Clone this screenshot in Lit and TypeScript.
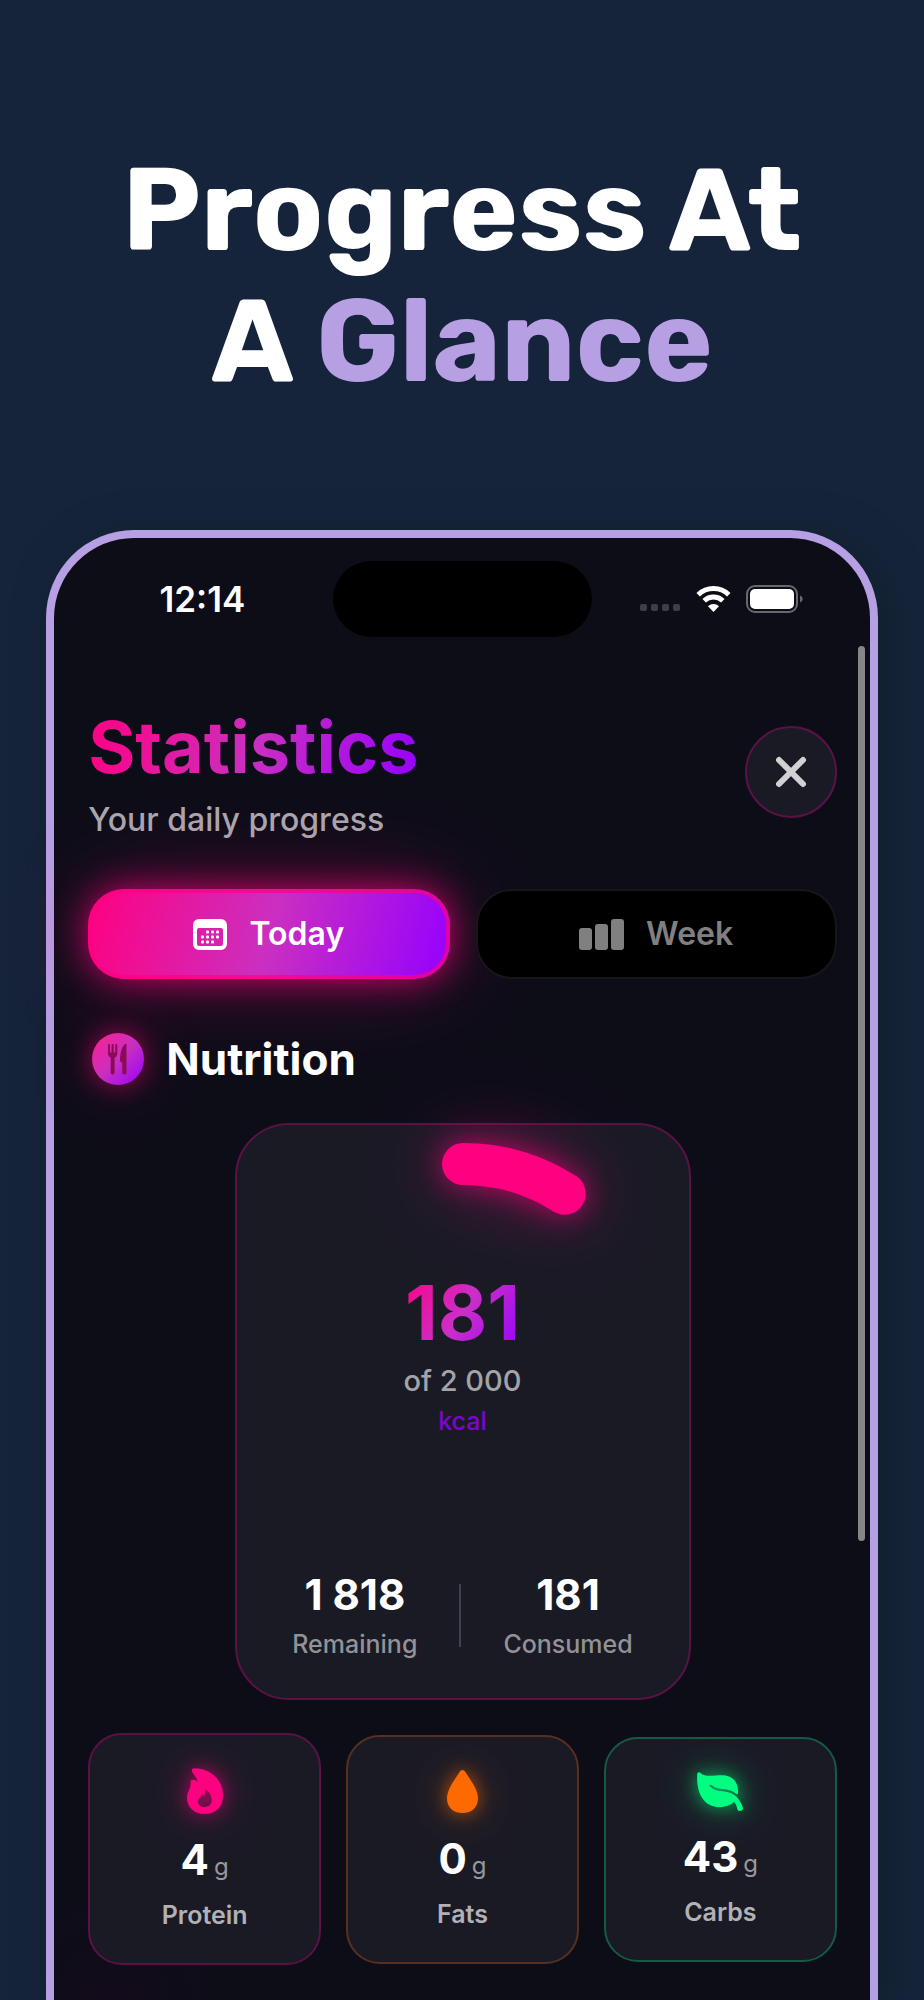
import { LitElement, html, css, svg } from "lit";
import { customElement, state, property } from "lit/decorators.js";
import { classMap } from "lit/directives/class-map.js";

const flameIcon = svg`<svg class="icon" viewBox="0 0 36 46" width="36" height="46" aria-hidden="true">
  <path fill="currentColor" fill-rule="evenodd" d="M7.2 0.3C24 0.6 36 12 36 27.5C36 39 28.500 46 17.500 46C7 46 0 39 0 29.500C0 24 3.600 21.500 3.600 15.500C3.600 14 3.500 12.700 4.400 12.100C6.800 11.200 9 12.600 10.600 13.700C10.200 8.500 4.800 5.600 4.800 2.200C4.800 1 5.800 0.300 7.200 0.300ZM18 21C18 24 18.300 26.600 16.800 28.600C16 27.600 15.800 26.200 15 25.300C14.800 28.600 11 29.800 11 33.200C11 36.800 13.900 39 17.700 39C21.700 39 24.700 36.600 24.700 32.600C24.700 27.500 22.300 23.200 18 21Z"/>
</svg>`;

const dropIcon = svg`<svg class="icon" viewBox="0 0 31 43" width="31" height="43" aria-hidden="true">
  <path fill="currentColor" d="M15.500 0C16.800 0 17.600 0.800 18.400 2C24.500 11.500 31 20 31 28.300C31 37.200 25 43 15.500 43C6 43 0 37.200 0 28.300C0 20 6.500 11.500 12.600 2C13.400 0.800 14.200 0 15.500 0Z"/>
</svg>`;

const leafIcon = svg`<svg class="icon" viewBox="0 0 46 39" width="46" height="39" aria-hidden="true">
  <path fill="currentColor" d="M0.200 1.800C0.600 0 2.400-0.400 3.600 0.900C8.500 5.600 16 3.200 25.500 3.200C35.500 3.200 42 10.500 41 21.200C40.800 22.200 39.800 22.400 39 21.700C34.500 17.600 28.500 17.400 23 16.700C18.500 16 16.500 14.800 13.800 12.800C12.800 12.300 12.100 13.200 12.800 14.100C15.600 17.600 19.800 18.800 25 19.300C32 20 37.500 21.800 41 26.500C43.300 29.500 45.300 33 46 36C46.200 38 44.500 39 42.800 39C41.300 39 40.600 38 40.200 36.700C39.500 34 38.800 32 37.300 29.800C33.500 33.600 28 35 22.500 35C8 35 -1 23 0.200 1.800Z"/>
</svg>`;

const calendarIcon = svg`<svg viewBox="0 0 34 31" width="34" height="31" aria-hidden="true">
  <path fill="currentColor" fill-rule="evenodd" d="M6 0H28A6 6 0 0 1 34 6V25A6 6 0 0 1 28 31H6A6 6 0 0 1 0 25V6A6 6 0 0 1 6 0ZM6 9A2 2 0 0 0 4 11V25A2 2 0 0 0 6 27H28A2 2 0 0 0 30 25V11A2 2 0 0 0 28 9Z"/>
  <g fill="currentColor">
    <rect x="13" y="11.500" width="3" height="3" rx="1"/><rect x="18" y="11.500" width="3" height="3" rx="1"/><rect x="23" y="11.500" width="3" height="3" rx="1"/>
    <rect x="8" y="16.500" width="3" height="3" rx="1"/><rect x="13" y="16.500" width="3" height="3" rx="1"/><rect x="18" y="16.500" width="3" height="3" rx="1"/><rect x="23" y="16.500" width="3" height="3" rx="1"/>
    <rect x="8" y="21.500" width="3" height="3" rx="1"/><rect x="13" y="21.500" width="3" height="3" rx="1"/><rect x="18" y="21.500" width="3" height="3" rx="1"/>
  </g>
</svg>`;

const barsIcon = svg`<svg viewBox="0 0 45 31" width="45" height="31" aria-hidden="true">
  <g fill="currentColor"><rect x="0" y="9" width="13" height="22" rx="3"/><rect x="16" y="5" width="13" height="26" rx="3"/><rect x="32" y="0" width="13" height="31" rx="3"/></g>
</svg>`;

const cutleryIcon = svg`<svg viewBox="0 0 52 52" width="52" height="52" aria-hidden="true">
  <g fill="#8a0c56">
    <path d="M16 12C16 10.700 18 10.700 18 12V19.500H19.600V12C19.600 10.700 21.700 10.700 21.700 12V19.500H23.300V12C23.300 10.700 25.300 10.700 25.300 12V20C25.300 22.600 24.300 24 22.600 24.800V39.500C22.600 42.300 18.700 42.300 18.700 39.500V24.800C17 24 16 22.600 16 20Z"/>
    <path d="M34.500 11.500V39.500C34.500 42.300 30.300 42.300 30.300 39.500V29.500C28.500 29.500 28 28.500 28 27C28.200 20.500 29.500 14 33 11C33.800 10.500 34.500 10.700 34.500 11.500Z"/>
  </g>
</svg>`;

@customElement("macro-card")
class MacroCard extends LitElement {
  @property() tone = "protein";
  @property() label = "";
  @property({ type: Number }) grams = 0;

  static styles = css`
    :host {
      display: block;
    }
    .card {
      box-sizing: border-box;
      display: flex;
      flex-direction: column;
      align-items: center;
      gap: 16px;
      padding: 33px 8px;
      border: 2px solid;
      border-radius: 34px;
      background: #1a1a25;
    }
    .protein {
      --tone: #ff0080;
      border-color: #5a1246;
    }
    .fats {
      --tone: #ff6a00;
      border-color: #58301f;
    }
    .carbs {
      --tone: #00ff80;
      border-color: #155a42;
    }
    .glyph {
      display: flex;
      margin-bottom: 6px;
      color: var(--tone);
    }
    .icon {
      overflow: visible;
      filter: drop-shadow(0 0 9px color-mix(in srgb, var(--tone) 60%, transparent))
        drop-shadow(0 0 22px color-mix(in srgb, var(--tone) 28%, transparent));
    }
    .amount {
      display: flex;
      align-items: baseline;
      gap: 5px;
      font-size: 42px;
      line-height: 48px;
      font-weight: 700;
      color: #fff;
    }
    .unit {
      font-size: 24px;
      line-height: 30px;
      font-weight: 400;
      color: #98989d;
    }
    .label {
      font-size: 25px;
      line-height: 30px;
      font-weight: 600;
      color: #b1b1b6;
    }
  `;

  render() {
    const icon = this.tone === "protein" ? flameIcon : this.tone === "fats" ? dropIcon : leafIcon;
    return html`
      <div class="card ${this.tone}">
        <span class="glyph">${icon}</span>
        <div class="amount"><span>${this.grams}</span><span class="unit">g</span></div>
        <div class="label">${this.label}</div>
      </div>
    `;
  }
}

@customElement("calorie-ring")
class CalorieRing extends LitElement {
  @property({ type: Number }) value = 0;
  @property({ type: Number }) goal = 1;

  static styles = css`
    :host {
      display: grid;
      place-items: center;
    }
    .arc,
    .text {
      grid-area: 1 / 1;
    }
    .arc {
      overflow: visible;
      filter: drop-shadow(0 0 14px rgba(255, 0, 128, 0.65)) drop-shadow(0 0 36px rgba(255, 0, 128, 0.35));
    }
    .text {
      display: flex;
      flex-direction: column;
      align-items: center;
      gap: 7px;
      padding-bottom: 2px;
    }
    .value {
      font-size: 76px;
      line-height: 88px;
      font-weight: 700;
      color: transparent;
      background: linear-gradient(125deg, #ff0080, #cb2fc8 50%, #9500ff);
      -webkit-background-clip: text;
      background-clip: text;
    }
    .goal {
      font-size: 29px;
      line-height: 36px;
      font-weight: 500;
      color: #a3a3a8;
    }
    .unit {
      font-size: 25px;
      line-height: 30px;
      font-weight: 500;
      color: #7d05cf;
    }
  `;

  render() {
    const r = 189;
    const angle = (this.value / this.goal) * Math.PI * 2;
    const x = 210 + r * Math.sin(angle);
    const y = 210 - r * Math.cos(angle);
    return html`
      <svg class="arc" viewBox="0 0 420 420" width="420" height="420" aria-hidden="true">
        <path d="M210 21A${r} ${r} 0 0 1 ${x} ${y}" fill="none" stroke="#ff0080" stroke-width="42" stroke-linecap="round" />
      </svg>
      <div class="text">
        <span class="value">${this.value}</span>
        <span class="goal">of 2 000</span>
        <span class="unit">kcal</span>
      </div>
    `;
  }
}

@customElement("app-root")
class AppRoot extends LitElement {
  @state() private range = "today";

  static styles = css`
    :host {
      display: flex;
      flex-direction: column;
      height: 100vh;
      overflow: hidden;
      background: #16243b;
      font-family: Inter, "Noto Sans", sans-serif;
    }
    .hero {
      padding: 145px 24px 123px;
    }
    .headline {
      margin: 0;
      text-align: center;
      font-family: Rubik, Inter, sans-serif;
      font-size: 116px;
      line-height: 131px;
      font-weight: 700;
      color: #fff;
    }
    .accent {
      color: #b79fe3;
    }
    .phone {
      box-sizing: border-box;
      position: relative;
      flex: 1 0 auto;
      width: 90%;
      margin: 0 auto;
      border: 8px solid #b79fe3;
      border-bottom: 0;
      border-radius: 88px 88px 0 0;
      background: radial-gradient(circle at 58px 100%, #130b1b 0, #0d0d18 100px);
      box-shadow: 10px 6px 40px rgba(12, 32, 36, 0.7);
    }
    .status {
      display: grid;
      grid-template-columns: 1fr 259px 1fr;
      align-items: center;
      justify-items: center;
      padding: 23px 18px 0;
    }
    .time {
      font-size: 35px;
      line-height: 40px;
      font-weight: 600;
      color: #fff;
    }
    .island {
      width: 100%;
      height: 76px;
      border-radius: 38px;
      background: #000;
    }
    .signals {
      display: flex;
      align-items: center;
      gap: 15px;
    }
    .scrollbar {
      position: absolute;
      top: 108px;
      right: 5px;
      width: 7px;
      height: 895px;
      border-radius: 4px;
      background: #868689;
    }
    .content {
      display: flex;
      flex-direction: column;
      padding: 66px 33px 35px 34px;
    }
    .header {
      display: flex;
      align-items: center;
      justify-content: space-between;
      margin-bottom: 49px;
    }
    .titles {
      display: flex;
      flex-direction: column;
      align-items: flex-start;
      gap: 9px;
    }
    .title {
      margin: 0;
      font-size: 72px;
      line-height: 88px;
      font-weight: 700;
      color: transparent;
      background: linear-gradient(105deg, #ff0080, #cb2fc0 50%, #9500ff);
      -webkit-background-clip: text;
      background-clip: text;
    }
    .subtitle {
      margin: 0;
      font-size: 32px;
      line-height: 40px;
      font-weight: 500;
      color: #aaa7ad;
    }
    .close {
      display: grid;
      place-items: center;
      width: 92px;
      height: 92px;
      padding: 0;
      border: 2px solid #5a1246;
      border-radius: 50%;
      background: #1a1a25;
      color: #d1d1d4;
    }
    .tabs {
      display: grid;
      grid-template-columns: 1fr 1fr;
      gap: 26px;
      margin-bottom: 54px;
    }
    .tab {
      display: flex;
      align-items: center;
      justify-content: center;
      gap: 22px;
      height: 90px;
      padding: 0;
      border: 2px solid #17171a;
      border-radius: 36px;
      background: #000;
      color: #808080;
      font-family: inherit;
      font-size: 32px;
      line-height: 40px;
      font-weight: 600;
    }
    .tab.active {
      border: 0;
      color: #fff;
      background: linear-gradient(104deg, #ff0080, #cb2fc0 50%, #9500ff);
      box-shadow:
        inset 0 0 0 4px rgba(255, 0, 128, 0.7),
        0 0 34px rgba(255, 0, 128, 0.75),
        0 0 90px rgba(255, 0, 128, 0.32);
    }
    .section {
      display: flex;
      align-items: center;
      gap: 22px;
      margin: 0 4px 38px;
    }
    .badge {
      display: flex;
      border-radius: 50%;
      background: linear-gradient(135deg, #ff1f8a, #cb2fc0 50%, #9500ff);
      box-shadow:
        0 0 24px rgba(255, 0, 128, 0.55),
        0 0 64px rgba(255, 0, 128, 0.25);
    }
    .section-title {
      margin: 0;
      font-size: 44px;
      line-height: 52px;
      font-weight: 700;
      color: #fff;
    }
    .calories {
      box-sizing: border-box;
      display: flex;
      flex-direction: column;
      align-items: center;
      align-self: center;
      gap: 8px;
      padding: 18px 16px 39px;
      margin-bottom: 33px;
      border: 2px solid #5a1246;
      border-radius: 54px;
      background: #1a1a25;
    }
    .totals {
      display: flex;
      align-items: center;
      gap: 42px;
    }
    .total {
      display: flex;
      flex-direction: column;
      align-items: center;
      gap: 10px;
    }
    .number {
      font-size: 42px;
      line-height: 48px;
      font-weight: 700;
      color: #fff;
    }
    .caption {
      font-size: 25px;
      line-height: 30px;
      font-weight: 500;
      color: #929297;
    }
    .divider {
      width: 2px;
      height: 63px;
      background: #41414d;
    }
    .macros {
      display: grid;
      grid-template-columns: repeat(3, 1fr);
      align-items: center;
      gap: 25px;
    }
  `;

  render() {
    const tab = (id: string, label: string, icon: unknown) => html`
      <button
        type="button"
        class=${classMap({ tab: true, active: this.range === id })}
        aria-pressed=${this.range === id}
        @click=${() => (this.range = id)}
      >
        ${icon}<span>${label}</span>
      </button>
    `;

    return html`
      <header class="hero">
        <h1 class="headline">Progress At<br />A <span class="accent">Glance</span></h1>
      </header>
      <main class="phone">
        <div class="status">
          <span class="time">12:14</span>
          <span class="island"></span>
          <span class="signals">
            <svg viewBox="0 0 41 28" width="41" height="28" aria-hidden="true">
              <g fill="#3e3e47">
                <rect x="0" y="19" width="7" height="7" rx="2" /><rect x="11" y="19" width="7" height="7" rx="2" />
                <rect x="22" y="19" width="7" height="7" rx="2" /><rect x="33" y="19" width="7" height="7" rx="2" />
              </g>
            </svg>
            <svg viewBox="0 0 35 28" width="35" height="28" aria-hidden="true">
              <g fill="none" stroke="#fff" stroke-width="5">
                <path d="M2.200 9.800A22 22 0 0 1 32.800 9.800" />
                <path d="M8.200 15.800A13.500 13.500 0 0 1 26.800 15.800" />
              </g>
              <path fill="#fff" d="M17.500 27L12 21.300A8 8 0 0 1 23 21.300Z" />
            </svg>
            <svg viewBox="0 0 57 28" width="57" height="28" aria-hidden="true">
              <rect x="1" y="1" width="50" height="26" rx="8" fill="none" stroke="#67676e" stroke-width="2" />
              <rect x="4" y="4" width="44" height="20" rx="5" fill="#fff" />
              <path d="M54 10.500C57.600 12 57.600 16 54 17.500Z" fill="#67676e" />
            </svg>
          </span>
        </div>
        <div class="scrollbar"></div>
        <div class="content">
          <div class="header">
            <div class="titles">
              <h2 class="title">Statistics</h2>
              <p class="subtitle">Your daily progress</p>
            </div>
            <button type="button" class="close" aria-label="Close">
              <svg viewBox="0 0 32 32" width="32" height="32" aria-hidden="true">
                <path d="M4 4L28 28M28 4L4 28" stroke="currentColor" stroke-width="6" stroke-linecap="round" />
              </svg>
            </button>
          </div>
          <div class="tabs">${tab("today", "Today", calendarIcon)} ${tab("week", "Week", barsIcon)}</div>
          <div class="section">
            <span class="badge">${cutleryIcon}</span>
            <h3 class="section-title">Nutrition</h3>
          </div>
          <section class="calories">
            <calorie-ring .value=${181} .goal=${2000}></calorie-ring>
            <div class="totals">
              <div class="total"><span class="number">1 818</span><span class="caption">Remaining</span></div>
              <div class="divider"></div>
              <div class="total"><span class="number">181</span><span class="caption">Consumed</span></div>
            </div>
          </section>
          <div class="macros">
            <macro-card tone="protein" label="Protein" .grams=${4}></macro-card>
            <macro-card tone="fats" label="Fats" .grams=${0}></macro-card>
            <macro-card tone="carbs" label="Carbs" .grams=${43}></macro-card>
          </div>
        </div>
      </main>
    `;
  }
}
